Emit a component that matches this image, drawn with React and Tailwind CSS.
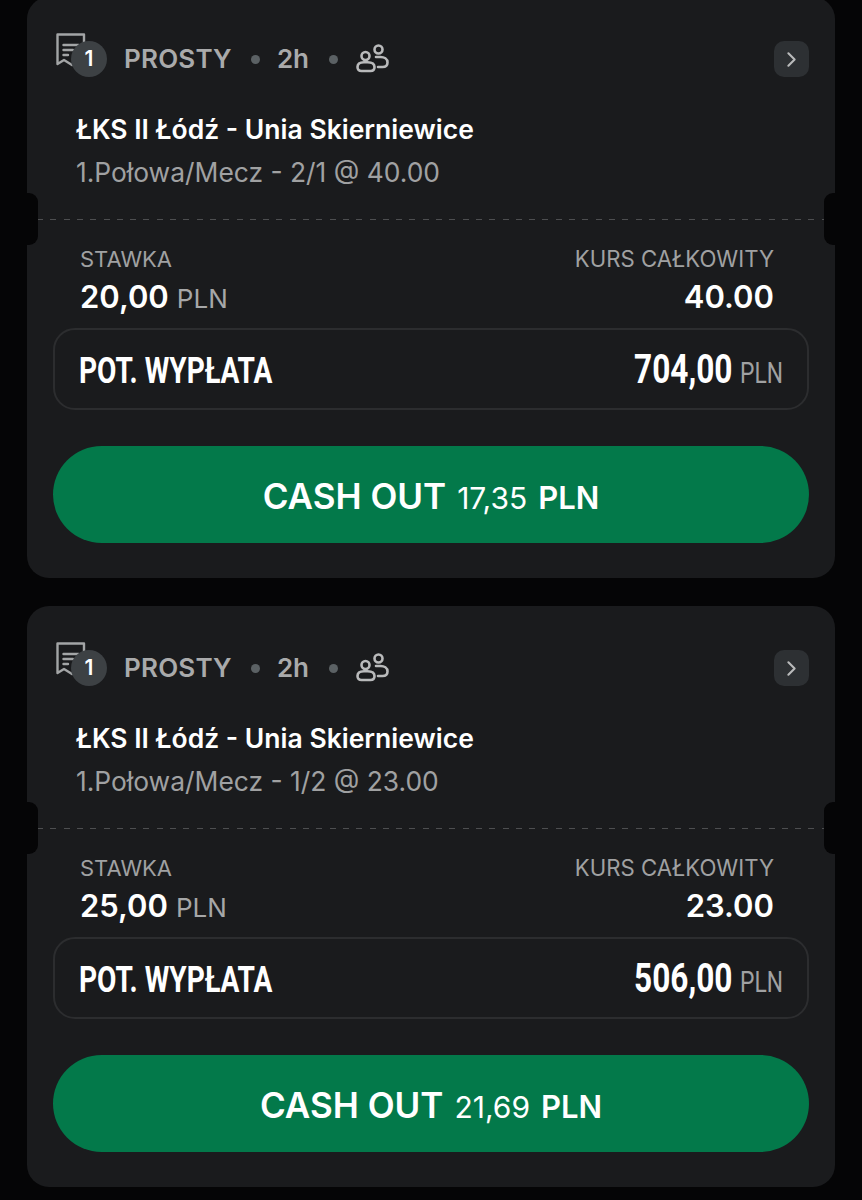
import React from 'react';
import { ChevronRight } from 'lucide-react';

const bets = [
    { pick: '1.Połowa/Mecz - 2/1 @ 40.00', stake: '20,00', odds: '40.00', payout: '704,00', cashout: '17,35' },
    { pick: '1.Połowa/Mecz - 1/2 @ 23.00', stake: '25,00', odds: '23.00', payout: '506,00', cashout: '21,69' },
];

function TicketIcon() {
    return (
        <svg width="32" height="34" viewBox="0 0 32 34" fill="none" stroke="#a3a5a6" strokeWidth="2.4">
            <path d="M1.5 1.5 H28 V12 M1.5 1.5 V31 L8 27 L16 32" strokeLinejoin="round" strokeLinecap="round" />
            <path d="M7.5 12 H22.5 M7.5 17 H17 M7.5 22 H12" strokeLinecap="round" />
        </svg>
    );
}

function PeopleIcon() {
    return (
        <svg width="33" height="29" viewBox="0 0 33 29" fill="none" stroke="#b9babb" strokeWidth="2.6">
            <circle cx="9.5" cy="12" r="4" />
            <path d="M1.5 23 C1.5 19.5 5 18.3 8 18.3 H11.5 C15 18.3 18.5 19.5 18.5 23 C18.5 25.8 17 27 14.5 27 H5.5 C3 27 1.5 25.8 1.5 23 Z" />
            <circle cx="22.5" cy="5.5" r="4" />
            <path d="M20 13 H24.5 C28 13 31.5 14.8 31.5 18.5 C31.5 21.5 29.5 23 26.5 23 H22" strokeLinecap="round" />
        </svg>
    );
}

function BetCard({ pick, stake, odds, payout, cashout }) {
    return (
        <div className="relative h-[581px] rounded-[22px] bg-[#1a1b1d] px-[26px] pt-[44px]">
            {/* Header */}
            <div className="flex h-9 items-center">
                <div className="relative h-9 w-[71px] shrink-0">
                    <div className="absolute left-[3px] top-[-8px]"><TicketIcon /></div>
                    <div className="absolute left-[18px] top-0 flex h-9 w-9 items-center justify-center rounded-full bg-[#3d4144] text-[21px] font-semibold text-white">1</div>
                </div>
                <span className="-mt-[2px] text-[26px] font-semibold tracking-[0.2px] text-[#a9aaab]">PROSTY</span>
                <span className="ml-[19px] mr-[17px] h-[9px] w-[9px] rounded-full bg-[#5b6164]" />
                <span className="-mt-[2px] text-[26px] font-semibold text-[#a9aaab]">2h</span>
                <span className="ml-[20px] mr-[18px] h-[9px] w-[9px] rounded-full bg-[#5b6164]" />
                <div className="-mt-[1px] flex"><PeopleIcon /></div>
                <div className="ml-auto flex h-9 w-[35px] items-center justify-center rounded-[10px] bg-[#2d3033]">
                    <ChevronRight size={25} strokeWidth={2} className="text-[#b9babb]" />
                </div>
            </div>

            {/* Match */}
            <div className="mt-[36px] pl-[23px]">
                <div className="text-[26.5px] leading-[32px] font-semibold text-white">ŁKS II Łódź - Unia Skierniewice</div>
                <div className="mt-[11px] text-[26.4px] leading-[32px] text-[#a0a1a2]">{pick}</div>
            </div>

            {/* Perforation */}
            <div className="absolute inset-x-[10px] top-[222px] h-px bg-[repeating-linear-gradient(90deg,#4d4e50_0,#4d4e50_6px,transparent_6px,transparent_13.3px)]" />
            <div className="absolute left-0 top-[196px] h-[52px] w-[11px] rounded-r-[9px] bg-[#050506]" />
            <div className="absolute right-0 top-[196px] h-[52px] w-[11px] rounded-l-[9px] bg-[#050506]" />

            {/* Stake and odds */}
            <div className="mt-[57px] flex justify-between pl-[27px] pr-[35px]">
                <div>
                    <div className="text-[22px] leading-[28px] text-[#a0a1a2]">STAWKA</div>
                    <div className="mt-[5px] leading-[38px]">
                        <span className="text-[31px] font-semibold text-white">{stake}</span>
                        <span className="ml-[8px] text-[26px] text-[#a6a7a8]">PLN</span>
                    </div>
                </div>
                <div className="text-right">
                    <div className="text-[22.2px] leading-[28px] text-[#a0a1a2]">KURS CAŁKOWITY</div>
                    <div className="mt-[5px] text-[31px] leading-[38px] font-semibold text-white">{odds}</div>
                </div>
            </div>

            {/* Potential payout, the reference uses a condensed face so Roboto is squeezed */}
            <div className="mt-[7px] flex h-[82px] items-center justify-between rounded-[22px] border-2 border-[#2c2d2f] pl-[24px] pr-[26px] font-['Roboto',sans-serif]">
                <span className="mt-[3px] inline-block origin-left scale-x-[0.78] whitespace-nowrap text-[36px] font-bold text-white">POT. WYPŁATA</span>
                <span className="mt-[2px] flex items-baseline">
                    <span className="inline-block w-[98px] origin-left scale-x-[0.79] whitespace-nowrap text-[40px] font-bold text-white">{payout}</span>
                    <span className="ml-[8px] inline-block w-[41px] origin-left scale-x-[0.76] whitespace-nowrap text-[30px] text-[#a0a1a2]">PLN</span>
                </span>
            </div>

            {/* Cash out */}
            <div className="mt-[36px] flex h-[97px] items-baseline justify-center rounded-full bg-[#03794a] pt-[24px] text-white">
                <span className="text-[35px] font-semibold">CASH OUT</span>
                <span className="ml-[11px] text-[30px]">{cashout}</span>
                <span className="ml-[11px] text-[31px] font-semibold">PLN</span>
            </div>
        </div>
    );
}

export default function App() {
    return (
        <div className="h-[1200px] overflow-hidden bg-[#050506] font-['Inter',sans-serif]">
            <div className="-mt-[3px] flex flex-col gap-[28px] px-[27px]">
                {bets.map((bet) => (
                    <BetCard key={bet.pick} {...bet} />
                ))}
            </div>
        </div>
    );
}
